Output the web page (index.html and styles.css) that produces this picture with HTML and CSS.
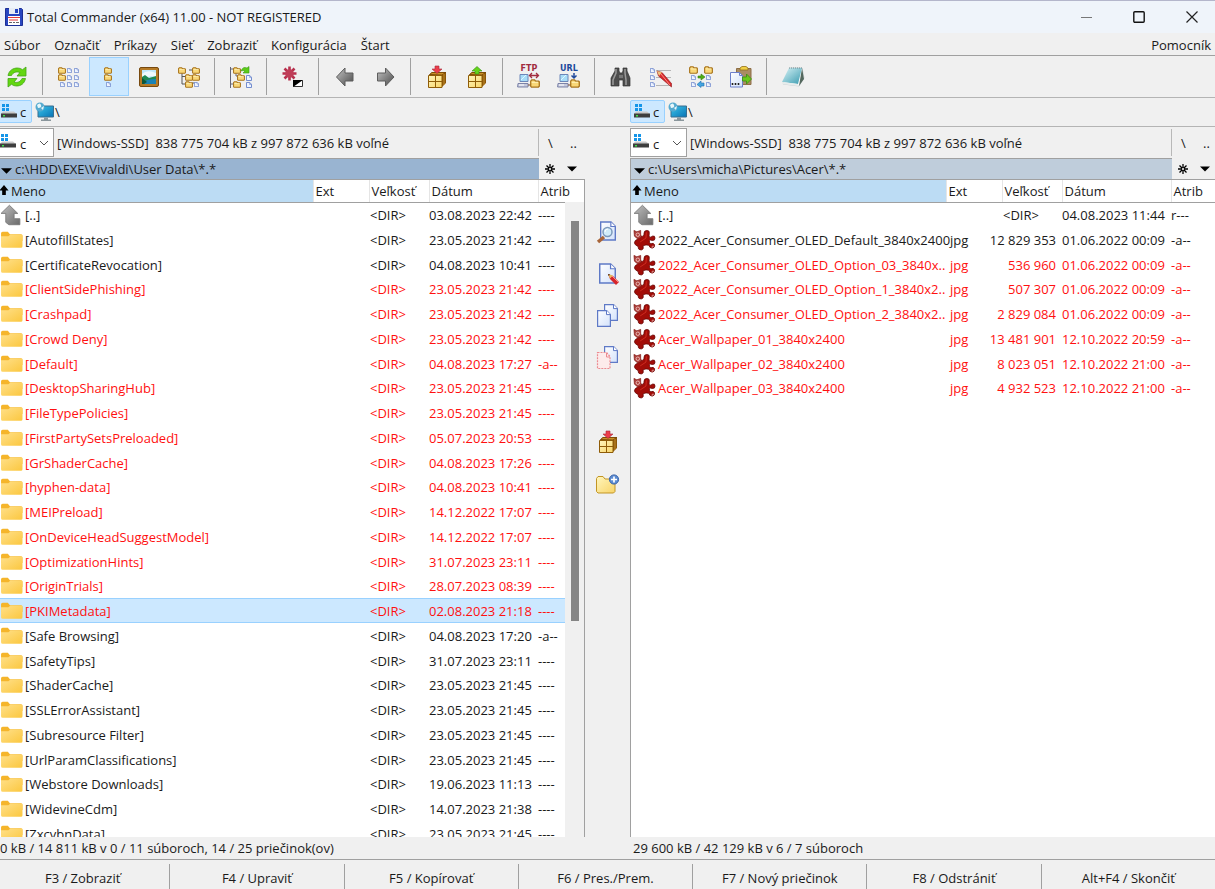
FILE: index.html
```html
<!DOCTYPE html>
<html lang="sk">
<head>
  <meta charset="UTF-8">
  <meta name="viewport" content="width=device-width, initial-scale=1.0">
  <title>Total Commander (x64) 11.00 - NOT REGISTERED</title>
  <link rel="stylesheet" href="styles.css">
</head>
<body>
  <svg class="sprite" aria-hidden="true">
    <defs>
      <linearGradient id="g-gold" x1="0" y1="0" x2="1" y2="1"><stop offset="0" stop-color="#fff6bd"/><stop offset="1" stop-color="#f8d468"/></linearGradient>
      <linearGradient id="g-folder" x1="0" y1="0" x2="1" y2="1"><stop offset="0" stop-color="#ffe08a"/><stop offset="1" stop-color="#fbc73f"/></linearGradient>
      <linearGradient id="g-gray" x1="0" y1="0" x2="1" y2="1"><stop offset="0" stop-color="#c4c4c4"/><stop offset="1" stop-color="#4a4a4a"/></linearGradient>
      <linearGradient id="g-up" x1="0" y1="0" x2="1" y2="1"><stop offset="0" stop-color="#c0c0c0"/><stop offset="1" stop-color="#6a6a6a"/></linearGradient>
      <linearGradient id="g-page" x1="0" y1="0" x2="1" y2="1"><stop offset="0" stop-color="#ffffff"/><stop offset="1" stop-color="#d3e2fb"/></linearGradient>
      <linearGradient id="g-teal" x1="0" y1="0" x2="1" y2="1"><stop offset="0" stop-color="#d8f3f6"/><stop offset="1" stop-color="#3a9bb0"/></linearGradient>
      <linearGradient id="g-screen" x1="0" y1="0" x2="1" y2="1"><stop offset="0" stop-color="#3cc4ea"/><stop offset="1" stop-color="#0873b4"/></linearGradient>
      <symbol id="i-page" viewBox="0 0 5 5"><path d="M.4.4h2.7l1.5 1.5v2.7H.4z" fill="#eef4ff" stroke="#6c86cc" stroke-width=".8"/><path d="M3 .4v1.7h1.6" fill="none" stroke="#6c86cc" stroke-width=".5"/></symbol>
      <symbol id="i-fold" viewBox="0 0 7 6"><path d="M.5 1.3 1.2.5h2l.7.9h2.2l.4.4v3.1l-.6.6H1l-.5-.5z" fill="#f9d777" stroke="#a9741c" stroke-width=".9"/><path d="M1.2 2.2h4.4" stroke="#fff2b8" stroke-width=".7"/></symbol>
      <symbol id="i-pc" viewBox="0 0 13 14"><path d="M3 .5h8v7H3z" fill="#a6dcf7" stroke="#6c86b8"/><path d="m4 6 5-5" stroke="#e0f6ff"/><path d="M1 9.500h10v3.500H.6z" fill="#c5c9dc" stroke="#7c83a8"/><path d="M2 11h5" stroke="#fff"/></symbol>
      <symbol id="i-sheet" viewBox="0 0 14 17"><path d="M.6.6h9l3.800 3.800v12H.6z" fill="url(#g-page)" stroke="#5e79c6" stroke-width="1.200"/><path d="M9.500.6v4h4" fill="#fff" stroke="#5e79c6"/></symbol>

      <symbol id="i-refresh" viewBox="0 0 24 24"><path d="M3 10.500C4 5.500 8 3 12.500 3q3 0 5 1.700L21 2v9h-9l3-3.500C11 6 8 7.500 6.500 10.500zM20.500 13.500C19.500 18.500 16 21 11.500 21q-3 0-5-1.700L3 22v-8.500h9L9 17c4 1.300 6.500-.5 8-3.500z" fill="#63d711" stroke="#44a518" stroke-width=".8"/></symbol>
      <symbol id="i-brief" viewBox="0 0 24 24">
        <use href="#i-fold" x="1" y="2" width="8" height="7"/><use href="#i-fold" x="1" y="9" width="8" height="7"/><use href="#i-page" x="3" y="17" width="5" height="5"/>
        <use href="#i-page" x="10" y="3" width="5" height="5"/><use href="#i-page" x="10" y="10" width="5" height="5"/><use href="#i-page" x="10" y="17" width="5" height="5"/>
        <use href="#i-page" x="17" y="3" width="5" height="5"/><use href="#i-page" x="17" y="10" width="5" height="5"/><use href="#i-page" x="17" y="17" width="5" height="5"/>
      </symbol>
      <symbol id="i-full" viewBox="0 0 24 24"><use href="#i-fold" x="7" y="2" width="8" height="7"/><use href="#i-fold" x="7" y="9" width="8" height="7"/><use href="#i-page" x="9" y="17" width="5" height="5"/></symbol>
      <symbol id="i-thumb" viewBox="0 0 24 24"><rect x="2.500" y="2.500" width="19" height="19" rx="1.500" fill="#b57a26" stroke="#77490f"/><path d="M5 5h14v14H5z" fill="#bfe8fa"/><path d="M5 9q5-5 14-1v4l-5-1-9 3z" fill="#effafd"/><path d="m5 12 3-2 4 3 7-2v5l-8 3H5z" fill="#1f8a52"/><path d="M5 18q4-4 14-4v5H5z" fill="#1b83b5"/><path d="m5 13 5 4-3 2H5z" fill="#0c563a"/></symbol>
      <symbol id="i-tree" viewBox="0 0 24 24"><path d="M5 8v11h4M5 11.500h4M12 5h4M15 18h3" fill="none" stroke="#555"/><use href="#i-fold" x="1" y="2" width="8" height="7"/><use href="#i-fold" x="15" y="2" width="8" height="7"/><use href="#i-fold" x="8" y="9" width="8" height="7"/><use href="#i-fold" x="15" y="9" width="8" height="7"/><use href="#i-fold" x="8" y="16" width="8" height="7"/><use href="#i-page" x="17" y="17" width="5" height="5"/></symbol>
      <symbol id="i-branch" viewBox="0 0 24 24"><path d="M1.500 2v21M1.500 4H5M1.500 19H5M7 8v3h2" fill="none" stroke="#667"/><use href="#i-fold" x="4" y="2" width="8" height="7"/><use href="#i-fold" x="8" y="9" width="8" height="7"/><use href="#i-fold" x="4" y="16" width="8" height="7"/><use href="#i-page" x="17" y="10" width="6" height="6"/><use href="#i-page" x="17" y="17" width="6" height="6"/><path d="M12 6q2-5 6-3l2-1.500V8h-6l2-2q-2-1-4 0z" fill="#5ccc19" stroke="#3b9a14" stroke-width=".6"/></symbol>
      <symbol id="i-invert" viewBox="0 0 24 24"><path d="M8.500 1.500v14M1.500 8.500h14M3.500 3.500l10 10M13.500 3.500l-10 10" stroke="#b7304d" stroke-width="2.600"/><circle cx="8.500" cy="8.500" r="4.300" fill="#bf3e58"/><path d="M12.500 15.500h9v6h-9z" fill="#fff" stroke="#333"/><path d="M12 15h10l-10 7z" fill="#000"/></symbol>
      <symbol id="i-back" viewBox="0 0 24 24"><path d="M3.500 12 12 3v5h8v8h-8v5z" fill="url(#g-gray)" stroke="#5d5d5d"/></symbol>
      <symbol id="i-fwd" viewBox="0 0 24 24"><path d="M21 12 12.500 3v5h-8v8h8v5z" fill="url(#g-gray)" stroke="#5d5d5d"/></symbol>
      <symbol id="i-box" viewBox="0 0 24 24"><path d="m4 10 3-3h14v11l-4 4z" fill="#8b5608"/><path d="m4.500 9.500 2.500-2h13.500L17 10z" fill="#c98f25" stroke="#6b3e04" stroke-width=".7"/><path d="M19 9v11" stroke="#d09b35" stroke-width=".8"/><path d="M3.500 10.500H17v12H3.500z" fill="url(#g-gold)" stroke="#8f5c08"/><path d="M10.500 10.500v12M3.500 16.500H17" stroke="#8f5c08"/></symbol>
      <symbol id="i-pack" viewBox="0 0 24 24"><use href="#i-box" width="24" height="24"/><path d="M10 1h4v3h3L12 8.500 7 4h3z" fill="#ec3e4c" stroke="#a8293a" stroke-width=".6"/></symbol>
      <symbol id="i-unpack" viewBox="0 0 24 24"><use href="#i-box" width="24" height="24"/><path d="M10 9h4V6h3l-5-4.500L7 6h3z" fill="#65d41c" stroke="#368c12" stroke-width=".6"/></symbol>
      <symbol id="i-ftp" viewBox="0 0 24 24"><use href="#i-pc" x="0" y="9" width="13" height="14"/><path d="M11 20h4" stroke="#7c4f2d"/><use href="#i-fold" x="13" y="14" width="10" height="9"/><path d="M12.500 10.500h9M15 8l-2.500 2.500L15 13M19 8l2.500 2.500L19 13" fill="none" stroke="#a12c3f" stroke-width="1.300"/></symbol>
      <symbol id="i-url" viewBox="0 0 24 24"><use href="#i-pc" x="0" y="9" width="13" height="14"/><path d="M11 20h4" stroke="#7c4f2d"/><use href="#i-fold" x="13" y="14" width="10" height="9"/><path d="M17 8v5M14.500 10.500l2.500 2.500 2.500-2.500" fill="none" stroke="#204a9c" stroke-width="1.500"/></symbol>
      <symbol id="i-find" viewBox="0 0 24 24"><path d="M6 3h4v3l1 2h2l1-2V3h4v3l3 7v8h-7v-6h-4v6H2v-8l4-7z" fill="#4d4d4d" stroke="#333" stroke-width=".7"/><path d="M7 4v4l-3 7v5M16 4v4l1 7v5" fill="none" stroke="#9b9b9b" stroke-width="1.500"/><path d="M10 10h4v3h-4z" fill="#777"/></symbol>
      <symbol id="i-rename" viewBox="0 0 24 24"><use href="#i-page" x="1" y="3" width="5" height="5"/><use href="#i-page" x="1" y="10" width="5" height="5"/><use href="#i-page" x="1" y="17" width="5" height="5"/><path d="M7 5.500h15M7 12.500h15M7 20.500h15" stroke="#b5b5b5"/><path d="m8 6 5 1.500 9.500 11v3.500L9.500 11z" fill="#d6272b" stroke="#8d1418" stroke-width=".6"/><path d="m8 6 5 1.500-3 3.500z" fill="#eec27c"/><path d="m12 9 9 11" stroke="#ff8a80"/></symbol>
      <symbol id="i-sync" viewBox="0 0 24 24"><use href="#i-fold" x="0" y="1" width="9" height="8"/><use href="#i-fold" x="15" y="1" width="9" height="8"/><use href="#i-page" x="2" y="10" width="5" height="5"/><use href="#i-page" x="2" y="17" width="5" height="5"/><use href="#i-page" x="17" y="10" width="5" height="5"/><use href="#i-page" x="17" y="17" width="5" height="5"/><path d="M9 11h3V9l4 3-4 3v-2H9z" fill="#4fae14" stroke="#35820d" stroke-width=".6"/><path d="M15 18h-3v-2l-4 3.500 4 3V21h3z" fill="#45a4e0" stroke="#1c6fb0" stroke-width=".6"/></symbol>
      <symbol id="i-clip" viewBox="0 0 24 24"><path d="M7.500 3.500h14.500v16H7.500z" fill="#a98c64" stroke="#8e6f46"/><path d="M11 5V3l2-1.500h4L19 3v2z" fill="#f0cf44" stroke="#93701c" stroke-width=".8"/><path d="M1.500 7.500h9l3 3V22h-12z" fill="url(#g-page)" stroke="#6d80cc"/><path d="M10.500 7.500v3h3" fill="none" stroke="#6d80cc"/><path d="M3.500 18v2M6.500 18v2M9.500 18v2" stroke="#222" stroke-width="1.600"/><path d="M13.500 12h4V9l5 5-5 5v-3h-4z" fill="#69c81d" stroke="#3c8d10" stroke-width=".8"/></symbol>
      <symbol id="i-notepad" viewBox="0 0 24 24"><path d="M9 3h12l2 10-5 8-16-2z" fill="#fff" stroke="#b9c3c5" stroke-width=".7"/><path d="m21 3 2 11-5 7z" fill="#54685e"/><path d="M8 3h13l-4 16-16-2z" fill="url(#g-teal)"/><path d="M8 3h13" stroke="#728c90" stroke-dasharray="1 1"/><path d="m1 17 16 2 .5 2L1 19z" fill="#e7ecec"/></symbol>

      <symbol id="i-view" viewBox="0 0 24 24"><use href="#i-sheet" x="4" y="1" width="16" height="20"/><path d="m2 22 6-5" stroke="#a86539" stroke-width="3.500"/><circle cx="11.500" cy="12" r="4.500" fill="#d1ecfa" stroke="#7c99bb" stroke-width="1.500"/><path d="M9 12q0-3 3-3" fill="none" stroke="#fff"/></symbol>
      <symbol id="i-edit" viewBox="0 0 24 24"><use href="#i-sheet" x="3" y="1" width="17" height="21"/><path d="m12 12 5 2 6 6-3 3-6-6z" fill="#d5252b"/><path d="m12 12 5 1.500-3 3z" fill="#e7b95e"/><path d="m12 12 2 .6-1.300 1.300z" fill="#3a2310"/><path d="m16 14 6 6" stroke="#ff8a80"/></symbol>
      <symbol id="i-copy" viewBox="0 0 24 24"><use href="#i-sheet" x="8" y="0" width="14" height="17"/><use href="#i-sheet" x="1" y="6" width="14" height="17"/></symbol>
      <symbol id="i-move" viewBox="0 0 24 24"><use href="#i-sheet" x="8" y="0" width="14" height="17"/><path d="M1.500 6.500h9l3.500 4v12H1.500z" fill="#fdebeb" stroke="#ec8b91" stroke-width="1.200" stroke-dasharray="2 1"/><path d="M10.500 7v4H14" fill="none" stroke="#ec8b91"/></symbol>
      <symbol id="i-newfolder" viewBox="0 0 24 24"><path d="M.5 6.500 2 4.500h5L9 7h9l1 1v11.500L17.500 21H2L.5 19.500z" fill="url(#g-gold)" stroke="#c29524"/><circle cx="18" cy="7.500" r="4.600" fill="#5b8bd2" stroke="#3a64aa"/><path d="M18 4.500v6M15 7.500h6" stroke="#fff" stroke-width="1.700"/></symbol>

      <symbol id="i-save" viewBox="0 0 18 18"><path d="M.5.5h16l1 1v16h-17z" fill="#2846c0" stroke="#1c2f96"/><path d="M4 0h10v6H4z" fill="#e7ecf5"/><path d="M10 1h3v4h-3z" fill="#2846c0"/><path d="M3 8h12v9H3z" fill="#fff"/><path d="M3 9.500h12M4 12h9" stroke="#e23b3b"/><path d="M4 14.500h3M8 14.500h2M11 14.500h3" stroke="#666"/></symbol>
      <symbol id="i-drive" viewBox="0 0 18 16"><path d="M2 0h3v3H2zM6 0h3v3H6zM2 4h3v3H2zM6 4h3v3H6z" fill="#1595e8"/><path d="M3 7.500h11L17 10H1z" fill="#c9c9c9"/><path d="M1 9.500h16v4H1z" fill="#3e3e3e"/><path d="M3 11h2v1.500H3z" fill="#3ee04a"/></symbol>
      <symbol id="i-net" viewBox="0 0 20 20"><path d="M3 4h15.500v11H3z" fill="url(#g-screen)" stroke="#3a6f90"/><path d="M9 15.500h4v2h3V19H6v-1.500h3z" fill="#8a969c"/><circle cx="5" cy="5" r="4.500" fill="#56aacf"/><path d="M2 3q3-3 4 0T3 6zM6 6l3-2-1 4z" fill="#e7f7fb"/></symbol>
      <symbol id="i-chev" viewBox="0 0 10 6"><path d="m1 1 4 4 4-4" fill="none" stroke="#555"/></symbol>
      <symbol id="i-tri" viewBox="0 0 12 6"><path d="M0 0h12L6 6z"/></symbol>
      <symbol id="i-star" viewBox="0 0 10 10"><path d="M5 0v10M0 5h10M1.500 1.500l7 7M8.500 1.500l-7 7" stroke="#000" stroke-width="1.300"/><circle cx="5" cy="5" r="1" fill="#fff"/></symbol>
      <symbol id="i-sort" viewBox="0 0 10 12"><path d="M5 0l5 6H7v5H3V6H0z"/></symbol>
      <symbol id="i-folder" viewBox="0 0 22 20"><path d="M1 3.500Q1 2 2.500 2h5l2 2.500H20q1.500 0 1.500 1.500v5H1z" fill="#f5b52b"/><path d="M1 6.500h7l2-1.800h10.500q1 0 1 1V16q0 1.500-1.500 1.500H2.500Q1 17.500 1 16z" fill="url(#g-folder)"/></symbol>
      <symbol id="i-up" viewBox="0 0 22 20"><path d="M9 .7 17 8.500h-3.500v5H19v5.800H8.500L5.500 17V8.500H1z" fill="url(#g-up)" stroke="#777" stroke-width=".8"/></symbol>
      <symbol id="i-jpg" viewBox="0 0 24 22"><path d="M6 8q2 0 4-1 2-.5 1.500-3 0-3 3-3t2.500 3q-.5 2 0 4 2 .5 3-1 3-1 3 2t-3 2.500q-2-1-3 .5 0 2 1.500 3 3-1.500 4 1 .5 3-2.500 3.500-3-.5-3.500-3-3-1-6 .5 1 4-1.500 4.300-4 .2-3.500-3.300Q4 17 2.500 16q-2-2 0-4.500 3-1 3.500-3.500z" fill="#a20d08" stroke="#650402" stroke-width=".8"/><path d="m1 1 3 1.500L8 1v4l1 3-4 2-3.500-3z" fill="#b0423d" stroke="#7c120e" stroke-width=".7"/><circle cx="5" cy="5.500" r="1.800" fill="none" stroke="#f0c8c5" stroke-width=".9"/><path d="m14 3-.5 6-6 4" fill="none" stroke="#cf2c20"/><path d="M20 20v-2.500h2" fill="none" stroke="#e9b5b1" stroke-width=".8"/></symbol>
    </defs>
  </svg>

  <header class="titlebar">
    <svg class="app-icon"><use href="#i-save"/></svg>
    <h1>Total Commander (x64) 11.00 - NOT REGISTERED</h1>
    <div class="win-buttons">
      <button type="button" aria-label="Minimalizovať"><svg viewBox="0 0 12 12"><path d="M0 6.500h11" stroke="#777"/></svg></button>
      <button type="button" aria-label="Maximalizovať"><svg viewBox="0 0 12 12"><rect x=".8" y=".8" width="10.400" height="10.400" rx="1" fill="none" stroke="#111" stroke-width="1.400"/></svg></button>
      <button type="button" aria-label="Zavrieť"><svg viewBox="0 0 12 12"><path d="m.5.5 11 11M11.500.5l-11 11" stroke="#222" stroke-width="1.200"/></svg></button>
    </div>
  </header>

  <nav class="menu">
    <a href="#">Súbor</a>
    <a href="#">Označiť</a>
    <a href="#">Príkazy</a>
    <a href="#">Sieť</a>
    <a href="#">Zobraziť</a>
    <a href="#">Konfigurácia</a>
    <a href="#">Štart</a>
    <a href="#" class="help">Pomocník</a>
  </nav>

  <div class="toolbar">
    <button type="button" aria-label="Obnoviť"><svg><use href="#i-refresh"/></svg></button>
    <i class="sep"></i>
    <button type="button" aria-label="Stručne"><svg><use href="#i-brief"/></svg></button>
    <button type="button" aria-label="Podrobne" class="on"><svg><use href="#i-full"/></svg></button>
    <button type="button" aria-label="Miniatúry"><svg><use href="#i-thumb"/></svg></button>
    <button type="button" aria-label="Strom"><svg><use href="#i-tree"/></svg></button>
    <i class="sep"></i>
    <button type="button" aria-label="Vetva"><svg><use href="#i-branch"/></svg></button>
    <i class="sep"></i>
    <button type="button" aria-label="Invertovať"><svg><use href="#i-invert"/></svg></button>
    <i class="sep"></i>
    <button type="button" aria-label="Späť"><svg><use href="#i-back"/></svg></button>
    <button type="button" aria-label="Vpred"><svg><use href="#i-fwd"/></svg></button>
    <i class="sep"></i>
    <button type="button" aria-label="Zbaliť"><svg><use href="#i-pack"/></svg></button>
    <button type="button" aria-label="Rozbaliť"><svg><use href="#i-unpack"/></svg></button>
    <i class="sep"></i>
    <button type="button" class="net ftp"><span>FTP</span><svg><use href="#i-ftp"/></svg></button>
    <button type="button" class="net url"><span>URL</span><svg><use href="#i-url"/></svg></button>
    <i class="sep"></i>
    <button type="button" aria-label="Hľadať"><svg><use href="#i-find"/></svg></button>
    <button type="button" aria-label="Premenovať"><svg><use href="#i-rename"/></svg></button>
    <button type="button" aria-label="Synchronizovať"><svg><use href="#i-sync"/></svg></button>
    <button type="button" aria-label="Kopírovať názvy"><svg><use href="#i-clip"/></svg></button>
    <i class="sep"></i>
    <button type="button" aria-label="Poznámkový blok"><svg><use href="#i-notepad"/></svg></button>
  </div>

  <div class="drives">
    <div class="drive-group">
      <button type="button" class="drive on"><svg><use href="#i-drive"/></svg>c</button>
      <button type="button" class="drive net-drive"><svg><use href="#i-net"/></svg>\</button>
    </div>
    <div class="drive-group">
      <button type="button" class="drive on"><svg><use href="#i-drive"/></svg>c</button>
      <button type="button" class="drive net-drive"><svg><use href="#i-net"/></svg>\</button>
    </div>
  </div>

  <main class="panels">
    <section class="panel active">
      <div class="drive-row">
        <div class="combo">
          <select aria-label="Disk"><option>c</option></select>
          <svg class="combo-icon"><use href="#i-drive"/></svg>
          <svg class="combo-chev"><use href="#i-chev"/></svg>
        </div>
        <span class="space">[Windows-SSD]&nbsp; 838 775 704 kB z 997 872 636 kB voľné</span>
        <div class="nav-buttons"><button type="button">\</button><button type="button">..</button></div>
      </div>
      <div class="path-row">
        <div class="path"><svg><use href="#i-tri"/></svg>c:\HDD\EXE\Vivaldi\User Data\*.*</div>
        <div class="path-buttons">
          <button type="button" aria-label="Obľúbené"><svg class="star"><use href="#i-star"/></svg></button>
          <button type="button" aria-label="História"><svg class="tri"><use href="#i-tri"/></svg></button>
        </div>
      </div>
      <div class="list">
        <table>
          <colgroup><col><col class="c-ext"><col class="c-size"><col class="c-date"><col class="c-attr"></colgroup>
          <thead><tr><th class="sorted"><svg><use href="#i-sort"/></svg>Meno</th><th>Ext</th><th>Veľkosť</th><th>Dátum</th><th>Atrib</th></tr></thead>
          <tbody id="left-files"></tbody>
        </table>
        <div class="scrollbar"><div class="thumb"></div></div>
      </div>
      <div class="status">0 kB / 14 811 kB v 0 / 11 súboroch, 14 / 25 priečinok(ov)</div>
    </section>

    <div class="side-tools">
      <button type="button" aria-label="Zobraziť súbor"><svg><use href="#i-view"/></svg></button>
      <button type="button" aria-label="Upraviť súbor"><svg><use href="#i-edit"/></svg></button>
      <button type="button" aria-label="Kopírovať"><svg><use href="#i-copy"/></svg></button>
      <button type="button" aria-label="Presunúť"><svg><use href="#i-move"/></svg></button>
      <i class="gap"></i>
      <button type="button" aria-label="Zbaliť"><svg><use href="#i-pack"/></svg></button>
      <button type="button" aria-label="Nový priečinok"><svg><use href="#i-newfolder"/></svg></button>
    </div>

    <section class="panel">
      <div class="drive-row">
        <div class="combo">
          <select aria-label="Disk"><option>c</option></select>
          <svg class="combo-icon"><use href="#i-drive"/></svg>
          <svg class="combo-chev"><use href="#i-chev"/></svg>
        </div>
        <span class="space">[Windows-SSD]&nbsp; 838 775 704 kB z 997 872 636 kB voľné</span>
        <div class="nav-buttons"><button type="button">\</button><button type="button">..</button></div>
      </div>
      <div class="path-row">
        <div class="path"><svg><use href="#i-tri"/></svg>c:\Users\micha\Pictures\Acer\*.*</div>
        <div class="path-buttons">
          <button type="button" aria-label="Obľúbené"><svg class="star"><use href="#i-star"/></svg></button>
          <button type="button" aria-label="História"><svg class="tri"><use href="#i-tri"/></svg></button>
        </div>
      </div>
      <div class="list">
        <table>
          <colgroup><col><col class="c-ext"><col class="c-size"><col class="c-date"><col class="c-attr"></colgroup>
          <thead><tr><th class="sorted"><svg><use href="#i-sort"/></svg>Meno</th><th>Ext</th><th>Veľkosť</th><th>Dátum</th><th>Atrib</th></tr></thead>
          <tbody id="right-files"></tbody>
        </table>
      </div>
      <div class="status">29 600 kB / 42 129 kB v 6 / 7 súboroch</div>
    </section>
  </main>

  <footer class="fkeys">
    <button type="button">F3 / Zobraziť</button>
    <button type="button">F4 / Upraviť</button>
    <button type="button">F5 / Kopírovať</button>
    <button type="button">F6 / Pres./Prem.</button>
    <button type="button">F7 / Nový priečinok</button>
    <button type="button">F8 / Odstrániť</button>
    <button type="button">Alt+F4 / Skončiť</button>
  </footer>
  <script src="files.js"></script>
</body>
</html>
```

FILE: styles.css
```css
:root {
  --face: #f0f0f0;
  --line: #a0a0a0;
  --hot: #cce8ff;
  --hot-line: #99d1ff;
}
* {
  margin: 0;
  padding: 0;
  box-sizing: border-box;
}
body {
  display: flex;
  flex-direction: column;
  height: 100vh;
  overflow: hidden;
  background: var(--face);
  color: #1a1a1a;
  font: 13px/18px "Open Sans", "Noto Sans", sans-serif;
}
button {
  font: inherit;
  color: inherit;
  background: none;
  border: none;
}
svg {
  display: block;
  flex-shrink: 0;
}
.sprite {
  position: absolute;
  width: 0;
  height: 0;
}

/* title bar and menu */
.titlebar {
  display: flex;
  align-items: center;
  height: 33px;
  padding-left: 5px;
  border-top: 1px solid #b4b6cb;
  background: #eff4fa;
}
.titlebar h1 {
  font-size: 13px;
  font-weight: 400;
}
.app-icon {
  width: 18px;
  height: 18px;
  margin-right: 4px;
}
.win-buttons {
  display: flex;
  margin-left: auto;
}
.win-buttons button {
  display: flex;
  align-items: center;
  justify-content: center;
  width: 52px;
  height: 30px;
}
.win-buttons svg {
  width: 12px;
  height: 12px;
}
.win-buttons button:last-child {
  width: 46px;
  margin-left: 4px;
}
.menu {
  display: flex;
  align-items: center;
  gap: 14px;
  height: 23px;
  padding: 2px 4px 0;
  border-bottom: 1px solid var(--line);
}
.menu a {
  color: inherit;
  text-decoration: none;
}
.menu .help { margin-left: auto; }

/* button bar */
.toolbar {
  display: flex;
  height: 42px;
  margin-left: -3px;
  padding-top: 1px;
  border-bottom: 1px solid #b4b4b4;
}
.toolbar button {
  display: flex;
  align-items: center;
  justify-content: center;
  position: relative;
  width: 40px;
  height: 39px;
}
.toolbar svg {
  width: 24px;
  height: 24px;
}
.toolbar .on {
  background: var(--hot);
  border: 1px solid var(--hot-line);
}
.sep {
  width: 1px;
  height: 37px;
  margin: 1px 6px 0 5px;
  background: var(--line);
}
.net span {
  position: absolute;
  top: 7px;
  left: 0;
  width: 100%;
  font: bold 8px/10px "DejaVu Sans", sans-serif;
  text-align: center;
}
.ftp span { color: #a12c3f; }
.url span { color: #204a9c; }

/* drive buttons */
.drives {
  display: grid;
  grid-template-columns: 1fr 1fr;
  column-gap: 45px;
  height: 29px;
  margin: 0 -3px;
  padding-top: 2px;
  border-bottom: 1px solid #b4b4b4;
}
.drive-group { display: flex; }
.drive {
  display: flex;
  align-items: center;
  gap: 2px;
  height: 23px;
  padding: 0 5px 0 2px;
  border: 1px solid transparent;
  border-radius: 2px;
  line-height: 22px;
}
.drive svg {
  width: 18px;
  height: 16px;
}
.drive.on {
  width: 35px;
  background: var(--hot);
  border-color: var(--hot-line);
}
.net-drive svg {
  width: 20px;
  height: 20px;
}
.net-drive { gap: 0; }

/* panels */
.panels {
  flex: 1;
  min-height: 0;
  display: grid;
  grid-template-columns: 1fr 45px 1fr;
  grid-template-rows: minmax(0, 1fr);
  margin: 0 -3px;
}
.panel {
  display: flex;
  flex-direction: column;
  min-width: 0;
}
.drive-row {
  display: flex;
  align-items: center;
  height: 31px;
}
.combo { position: relative; }
.combo select {
  display: block;
  width: 57px;
  height: 29px;
  padding: 3px 0 0 22px;
  border: 1px solid var(--line);
  background: #fff;
  color: inherit;
  appearance: none;
  font: inherit;
}
.combo-icon {
  position: absolute;
  left: 2px;
  top: 6px;
  width: 18px;
  height: 16px;
}
.combo-chev {
  position: absolute;
  right: 5px;
  top: 12px;
  width: 10px;
  height: 6px;
}
.space {
  margin-left: 3px;
  white-space: nowrap;
}
.nav-buttons {
  display: flex;
  width: 47px;
  height: 27px;
  margin-left: auto;
  border-left: 1px solid #b8b8b8;
}
.nav-buttons button { width: 23px; }
.path-row {
  display: flex;
  height: 21px;
}
.path {
  flex: 1;
  display: flex;
  align-items: center;
  gap: 3px;
  padding-left: 3px;
  border: solid var(--line);
  border-width: 1px 0 0 1px;
  background: #bfcddb;
}
.active .path { background: #99b4d1; }
.path svg {
  width: 11px;
  height: 6px;
  margin-top: 4px;
}
.path-buttons {
  display: flex;
  width: 46px;
}
.path-buttons button {
  display: flex;
  align-items: center;
  justify-content: center;
  width: 22px;
}
.star, .tri { width: 10px; }
.star { height: 10px; }
.tri { height: 6px; }

.list {
  flex: 1;
  min-height: 0;
  position: relative;
  overflow: hidden;
  border: solid var(--line);
  border-width: 1px 1px 0;
  background: #fff;
}
table {
  width: 100%;
  border-collapse: collapse;
  table-layout: fixed;
}
.c-ext { width: 56px; }
.c-size { width: 60px; }
.c-date { width: 109px; }
.c-attr { width: 46px; }
th {
  height: 22px;
  padding-left: 2px;
  border-left: 1px solid #e5e5e5;
  border-bottom: 1px solid var(--line);
  font-weight: 400;
  text-align: left;
}
th.sorted {
  padding-left: 1px;
  border-left: none;
  background: #bcdcf4;
}
th svg {
  display: inline-block;
  width: 10px;
  height: 11px;
  margin-right: 2px;
}
td {
  height: 25px;
  white-space: nowrap;
}
tbody tr:nth-child(4n) td { height: 24px; }
.name {
  display: flex;
  align-items: center;
  gap: 2px;
  padding-left: 2px;
}
.name svg {
  width: 23px;
  height: 22px;
}
.ext { padding-left: 4px; }
.size div {
  display: flex;
  justify-content: flex-end;
  padding-right: 6px;
}
.dir { padding-left: 1px; }
.marked { color: #ff1010; }
.cursor {
  background: var(--hot);
  outline: 1px solid var(--hot-line);
  outline-offset: -1px;
}
.scrollbar {
  position: absolute;
  top: 22px;
  right: 0;
  bottom: 0;
  width: 19px;
  padding: 19px 5px 0 6px;
  background: var(--face);
}
.thumb {
  height: 65%;
  background: #858585;
}
.status {
  height: 23px;
  padding: 2px 2px 2px 3px;
  border-bottom: 1px solid var(--line);
}

.side-tools {
  padding-top: 84px;
  border-bottom: 1px solid var(--line);
}
.side-tools button {
  display: flex;
  align-items: center;
  justify-content: center;
  width: 100%;
  height: 42px;
}
.side-tools .gap {
  display: block;
  height: 42px;
}
.side-tools svg {
  width: 24px;
  height: 24px;
}

/* function keys */
.fkeys {
  display: flex;
  height: 29px;
  margin-left: -4px;
  padding-top: 4px;
}
.fkeys button {
  flex: 1;
  padding-top: 2px;
  border-right: 1px solid var(--line);
}
.fkeys button:last-child { border-right: none; }
```

FILE: files.js
```js
"use strict";

// name, date, attributes, marked
const leftFiles = [
  ['..', '03.08.2023 22:42', '----', 0],
  ['AutofillStates', '23.05.2023 21:42', '----', 0],
  ['CertificateRevocation', '04.08.2023 10:41', '----', 0],
  ['ClientSidePhishing', '23.05.2023 21:42', '----', 1],
  ['Crashpad', '23.05.2023 21:42', '----', 1],
  ['Crowd Deny', '23.05.2023 21:42', '----', 1],
  ['Default', '04.08.2023 17:27', '-a--', 1],
  ['DesktopSharingHub', '23.05.2023 21:45', '----', 1],
  ['FileTypePolicies', '23.05.2023 21:45', '----', 1],
  ['FirstPartySetsPreloaded', '05.07.2023 20:53', '----', 1],
  ['GrShaderCache', '04.08.2023 17:26', '----', 1],
  ['hyphen-data', '04.08.2023 10:41', '----', 1],
  ['MEIPreload', '14.12.2022 17:07', '----', 1],
  ['OnDeviceHeadSuggestModel', '14.12.2022 17:07', '----', 1],
  ['OptimizationHints', '31.07.2023 23:11', '----', 1],
  ['OriginTrials', '28.07.2023 08:39', '----', 1],
  ['PKIMetadata', '02.08.2023 21:18', '----', 1],
  ['Safe Browsing', '04.08.2023 17:20', '-a--', 0],
  ['SafetyTips', '31.07.2023 23:11', '----', 0],
  ['ShaderCache', '23.05.2023 21:45', '----', 0],
  ['SSLErrorAssistant', '23.05.2023 21:45', '----', 0],
  ['Subresource Filter', '23.05.2023 21:45', '----', 0],
  ['UrlParamClassifications', '23.05.2023 21:45', '----', 0],
  ['Webstore Downloads', '19.06.2023 11:13', '----', 0],
  ['WidevineCdm', '14.07.2023 21:38', '----', 0],
  ['ZxcvbnData', '23.05.2023 21:45', '----', 0]
];

// name, size, date, marked
const rightFiles = [
  ['2022_Acer_Consumer_OLED_Default_3840x2400', '12 829 353', '01.06.2022 00:09', 0],
  ['2022_Acer_Consumer_OLED_Option_03_3840x..', '536 960', '01.06.2022 00:09', 1],
  ['2022_Acer_Consumer_OLED_Option_1_3840x2..', '507 307', '01.06.2022 00:09', 1],
  ['2022_Acer_Consumer_OLED_Option_2_3840x2..', '2 829 084', '01.06.2022 00:09', 1],
  ['Acer_Wallpaper_01_3840x2400', '13 481 901', '12.10.2022 20:59', 1],
  ['Acer_Wallpaper_02_3840x2400', '8 023 051', '12.10.2022 21:00', 1],
  ['Acer_Wallpaper_03_3840x2400', '4 932 523', '12.10.2022 21:00', 1]
];

function row(icon, name, ext, size, date, attr, cls) {
  const sizeCls = size === '&lt;DIR&gt;' ? 'dir' : 'size';
  return `<tr class="${cls}"><td><div class="name"><svg><use href="#i-${icon}"/></svg><span>${name}</span></div></td>
    <td class="ext">${ext}</td><td class="${sizeCls}"><div>${size}</div></td><td>${date}</td><td>${attr}</td></tr>`;
}

document.getElementById('left-files').innerHTML = leftFiles.map(([name, date, attr, marked]) => {
  const cls = (marked ? 'marked' : '') + (name === 'PKIMetadata' ? ' cursor' : '');
  return row(name === '..' ? 'up' : 'folder', `[${name}]`, '', '&lt;DIR&gt;', date, attr, cls);
}).join('');

document.getElementById('right-files').innerHTML =
  row('up', '[..]', '', '&lt;DIR&gt;', '04.08.2023 11:44', 'r---', '') +
  rightFiles.map(([name, size, date, marked]) => row('jpg', name, 'jpg', size, date, '-a--', marked ? 'marked' : '')).join('');
```
